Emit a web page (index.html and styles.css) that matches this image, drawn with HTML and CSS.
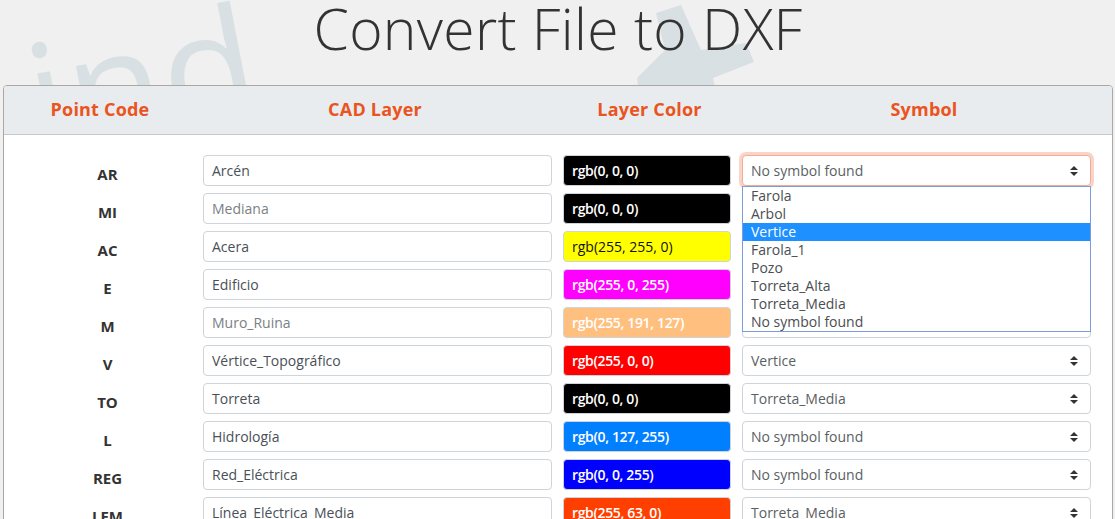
FILE: index.html
```html
<!DOCTYPE html>
<html lang="es">
<head>
<meta charset="utf-8">
<title>Convert File to DXF</title>
<link rel="stylesheet" href="styles.css">
</head>
<body>
<div class="page">
  <div class="watermark" aria-hidden="true">
    <span class="wm-text">ind</span>
    <svg class="wm-arrow" width="140" height="95" viewBox="0 0 140 95">
      <polygon points="19,9 44,1 64,46 109,39 117,58 76,74 80,95 3,95 0,74 28,46"/>
    </svg>
  </div>

  <h1 class="title">Convert File to DXF</h1>

  <div class="card">
    <div class="card-header">
      <div class="hcell">Point Code</div>
      <div class="hcell">CAD Layer</div>
      <div class="hcell">Layer Color</div>
      <div class="hcell">Symbol</div>
    </div>

    <div class="card-body">
      <div class="row">
        <div class="code">AR</div>
        <div class="field">Arcén</div>
        <div class="swatch light-text swatch-black">rgb(0, 0, 0)</div>
        <div class="select-wrap">
          <div class="select is-focused"><span>No symbol found</span><svg class="arrows" width="8" height="10" viewBox="0 0 4 5"><path d="M2 0L0 2h4zm0 5L0 3h4z"/></svg></div>
          <ul class="dropdown">
            <li>Farola</li>
            <li>Arbol</li>
            <li class="active">Vertice</li>
            <li>Farola_1</li>
            <li>Pozo</li>
            <li>Torreta_Alta</li>
            <li>Torreta_Media</li>
            <li>No symbol found</li>
          </ul>
        </div>
      </div>

      <div class="row">
        <div class="code">MI</div>
        <div class="field placeholder">Mediana</div>
        <div class="swatch light-text swatch-black">rgb(0, 0, 0)</div>
        <div class="select-wrap"><div class="select"><span>No symbol found</span><svg class="arrows" width="8" height="10" viewBox="0 0 4 5"><path d="M2 0L0 2h4zm0 5L0 3h4z"/></svg></div></div>
      </div>

      <div class="row">
        <div class="code">AC</div>
        <div class="field">Acera</div>
        <div class="swatch dark-text swatch-yellow">rgb(255, 255, 0)</div>
        <div class="select-wrap"><div class="select"><span>No symbol found</span><svg class="arrows" width="8" height="10" viewBox="0 0 4 5"><path d="M2 0L0 2h4zm0 5L0 3h4z"/></svg></div></div>
      </div>

      <div class="row">
        <div class="code">E</div>
        <div class="field">Edificio</div>
        <div class="swatch light-text swatch-magenta">rgb(255, 0, 255)</div>
        <div class="select-wrap"><div class="select"><span>No symbol found</span><svg class="arrows" width="8" height="10" viewBox="0 0 4 5"><path d="M2 0L0 2h4zm0 5L0 3h4z"/></svg></div></div>
      </div>

      <div class="row">
        <div class="code">M</div>
        <div class="field placeholder">Muro_Ruina</div>
        <div class="swatch light-text swatch-peach">rgb(255, 191, 127)</div>
        <div class="select-wrap"><div class="select"><span>No symbol found</span><svg class="arrows" width="8" height="10" viewBox="0 0 4 5"><path d="M2 0L0 2h4zm0 5L0 3h4z"/></svg></div></div>
      </div>

      <div class="row">
        <div class="code">V</div>
        <div class="field">Vértice_Topográfico</div>
        <div class="swatch light-text swatch-red">rgb(255, 0, 0)</div>
        <div class="select-wrap"><div class="select"><span>Vertice</span><svg class="arrows" width="8" height="10" viewBox="0 0 4 5"><path d="M2 0L0 2h4zm0 5L0 3h4z"/></svg></div></div>
      </div>

      <div class="row">
        <div class="code">TO</div>
        <div class="field">Torreta</div>
        <div class="swatch light-text swatch-black">rgb(0, 0, 0)</div>
        <div class="select-wrap"><div class="select"><span>Torreta_Media</span><svg class="arrows" width="8" height="10" viewBox="0 0 4 5"><path d="M2 0L0 2h4zm0 5L0 3h4z"/></svg></div></div>
      </div>

      <div class="row">
        <div class="code">L</div>
        <div class="field">Hidrología</div>
        <div class="swatch light-text swatch-azure">rgb(0, 127, 255)</div>
        <div class="select-wrap"><div class="select"><span>No symbol found</span><svg class="arrows" width="8" height="10" viewBox="0 0 4 5"><path d="M2 0L0 2h4zm0 5L0 3h4z"/></svg></div></div>
      </div>

      <div class="row">
        <div class="code">REG</div>
        <div class="field">Red_Eléctrica</div>
        <div class="swatch light-text swatch-blue">rgb(0, 0, 255)</div>
        <div class="select-wrap"><div class="select"><span>No symbol found</span><svg class="arrows" width="8" height="10" viewBox="0 0 4 5"><path d="M2 0L0 2h4zm0 5L0 3h4z"/></svg></div></div>
      </div>

      <div class="row">
        <div class="code">LEM</div>
        <div class="field">Línea_Eléctrica_Media</div>
        <div class="swatch light-text swatch-orange">rgb(255, 63, 0)</div>
        <div class="select-wrap"><div class="select"><span>Torreta_Media</span><svg class="arrows" width="8" height="10" viewBox="0 0 4 5"><path d="M2 0L0 2h4zm0 5L0 3h4z"/></svg></div></div>
      </div>
    </div>
  </div>
</div>
</body>
</html>
```

FILE: styles.css
```css
* { box-sizing: border-box; }

html, body {
  margin: 0;
  padding: 0;
  height: 100%;
  overflow: hidden;
}

body {
  background: #f0f0f0;
  color: #333;
  font-family: "Open Sans", "Noto Sans", "DejaVu Sans", sans-serif;
  font-size: 14px;
}

.page {
  position: relative;
  padding: 0 2px 0 3px;
}

/* decorative background watermark */
.watermark {
  position: absolute;
  inset: 0;
  z-index: 0;
  pointer-events: none;
  overflow: hidden;
  height: 519px;
}

.wm-text {
  position: absolute;
  left: 14px;
  top: 22px;
  font-family: "Open Sans", sans-serif;
  font-size: 155px;
  line-height: 1;
  color: #d8e0e3;
  transform: rotate(-11deg);
  transform-origin: left top;
}

.wm-arrow {
  position: absolute;
  left: 637px;
  top: 4px;
  fill: #d8e0e3;
}

.title {
  position: relative;
  z-index: 1;
  margin: 0;
  padding-top: 2px;
  text-align: center;
  font-size: 57px;
  font-weight: 300;
  line-height: 52px;
  color: #333;
  letter-spacing: 0.3px;
}

.card {
  position: relative;
  z-index: 1;
  margin-top: 31px;
  width: 1110px;
  background: #fff;
  border: 1px solid #aca7a2;
  border-radius: 4px;
  height: 460px;
}

.card-header {
  display: grid;
  grid-template-columns: 192px 358px 191px 358px;
  height: 49px;
  background: #e9ecef;
  border-bottom: 1px solid #c8c8c8;
  border-radius: 3px 3px 0 0;
  align-items: center;
  padding-bottom: 3px;
}

.hcell {
  text-align: center;
  font-size: 18px;
  font-weight: 700;
  color: #e95420;
  letter-spacing: 0.2px;
}

.card-body {
  padding-top: 20px;
  display: flex;
  flex-direction: column;
  gap: 7px;
}

.row {
  display: grid;
  grid-template-columns: 188px 349px 168px 349px;
  column-gap: 11px;
  height: 31px;
}

.code {
  padding-left: 19px;
  padding-top: 4px;
  text-align: center;
  font-weight: 700;
  font-size: 15px;
  line-height: 31px;
  color: #333;
}

.field,
.swatch,
.select {
  height: 31px;
  border: 1px solid #ced4da;
  border-radius: 4px;
  padding: 0 8px;
  display: flex;
  align-items: center;
  font-size: 14px;
  white-space: nowrap;
}

.field {
  background: #fff;
  color: #495057;
}

.field.placeholder { color: #7b7f84; }

.swatch { font-weight: 600; letter-spacing: -0.35px; }
.light-text { color: #fff; }
.dark-text { color: #111; font-weight: 400; letter-spacing: 0; }

.swatch-black { background: rgb(0, 0, 0); }
.swatch-yellow { background: rgb(255, 255, 0); }
.swatch-magenta { background: rgb(255, 0, 255); }
.swatch-peach { background: rgb(255, 191, 127); }
.swatch-red { background: rgb(255, 0, 0); }
.swatch-azure { background: rgb(0, 127, 255); }
.swatch-blue { background: rgb(0, 0, 255); }
.swatch-orange { background: rgb(255, 63, 0); }

.select-wrap { position: relative; }

.select {
  background: #fff;
  color: #5a5f64;
  justify-content: space-between;
  padding-right: 12px;
}

.select.is-focused {
  border-color: #f4ad94;
  box-shadow: 0 0 0 3px rgba(233, 84, 32, 0.25);
}

.arrows { fill: #333; flex: none; }

.dropdown {
  position: absolute;
  z-index: 5;
  left: 0;
  right: 0;
  top: 31px;
  margin: 0;
  padding: 0;
  list-style: none;
  background: #fff;
  border: 1px solid #7b9ed9;
}

.dropdown li {
  height: 18px;
  line-height: 18px;
  padding: 0 8px;
  font-size: 14px;
  color: #4a4e52;
  white-space: nowrap;
}

.dropdown li.active {
  background: #1e90ff;
  color: #fff;
}
```
